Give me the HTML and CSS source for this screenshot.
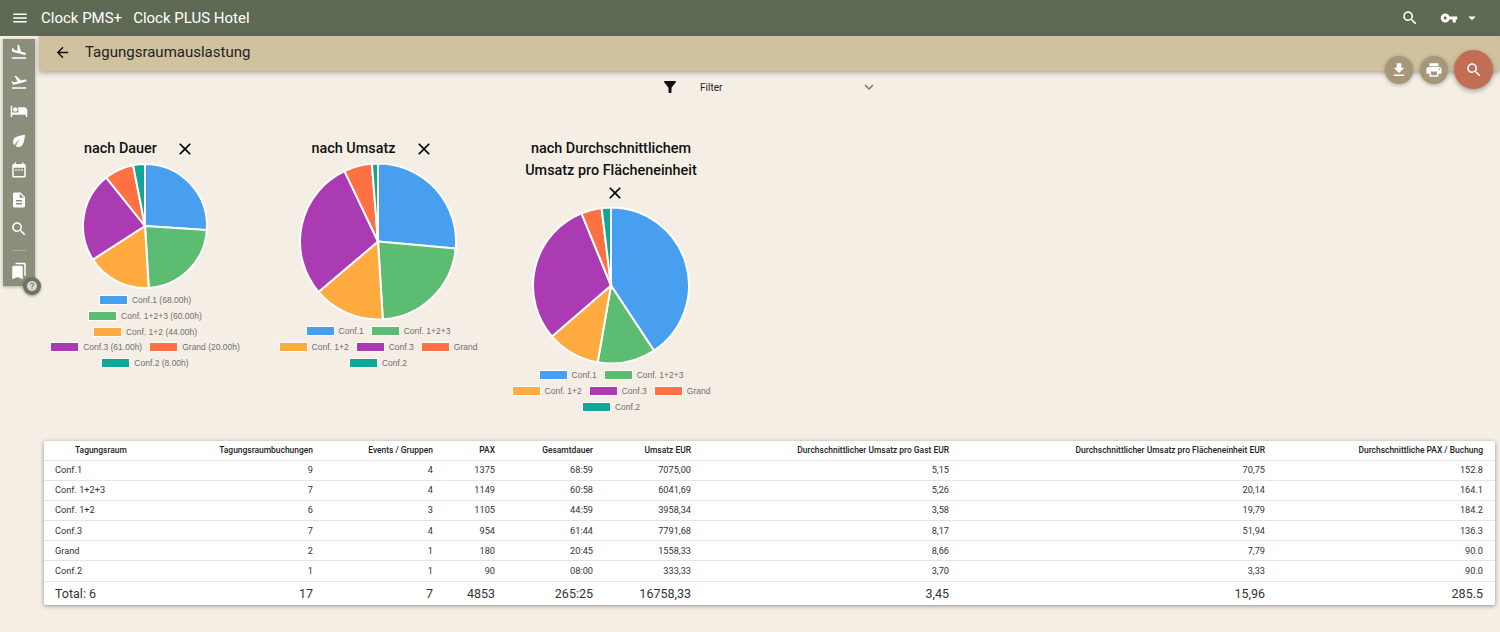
FILE: index.html
```html
<!DOCTYPE html>
<html lang="de">
<head>
<meta charset="utf-8">
<title>Tagungsraumauslastung</title>
<link rel="stylesheet" href="styles.css">
</head>
<body>
<svg class="defs" width="0" height="0" aria-hidden="true">
  <symbol id="i-menu" viewBox="0 0 24 24"><path d="M3 18h18v-2H3v2zm0-5h18v-2H3v2zm0-7v2h18V6H3z"/></symbol>
  <symbol id="i-search" viewBox="0 0 24 24"><path d="M15.5 14h-.79l-.28-.27C15.41 12.59 16 11.11 16 9.5 16 5.91 13.09 3 9.5 3S3 5.91 3 9.5 5.91 16 9.5 16c1.61 0 3.09-.59 4.23-1.57l.27.28v.79l5 4.99L20.49 19l-4.99-5zm-6 0C7.01 14 5 11.99 5 9.5S7.01 5 9.5 5 14 7.01 14 9.5 11.99 14 9.5 14z"/></symbol>
  <symbol id="i-key" viewBox="0 0 24 24"><path d="M12.65 10C11.83 7.67 9.61 6 7 6c-3.31 0-6 2.69-6 6s2.69 6 6 6c2.61 0 4.83-1.67 5.65-4H17v4h4v-4h2v-4H12.65zM7 14c-1.1 0-2-.9-2-2s.9-2 2-2 2 .9 2 2-.9 2-2 2z"/></symbol>
  <symbol id="i-drop" viewBox="0 0 24 24"><path d="M7 10l5 5 5-5z"/></symbol>
  <symbol id="i-back" viewBox="0 0 24 24"><path d="M20 11H7.83l5.59-5.59L12 4l-8 8 8 8 1.41-1.41L7.83 13H20v-2z"/></symbol>
  <symbol id="i-takeoff" viewBox="0 0 24 24"><path d="M2.5 19h19v2h-19zm19.57-9.36c-.21-.8-1.04-1.28-1.84-1.06L14.92 10l-6.9-6.43-1.93.51 4.14 7.17-4.97 1.33-1.97-1.54-1.45.39 1.82 3.16.77 1.33 1.6-.43 5.31-1.42 4.35-1.16L21 11.49c.81-.23 1.28-1.05 1.07-1.85z"/></symbol>
  <symbol id="i-land" viewBox="0 0 24 24"><path d="M2.5 19h19v2h-19zm7.18-5.73l4.35 1.16 5.31 1.42c.8.21 1.62-.26 1.84-1.06.21-.8-.26-1.62-1.06-1.84l-5.31-1.42-2.76-9.02L10.12 2v8.28L5.15 8.95l-.93-2.32-1.45-.39v5.17l1.6.43 5.31 1.43z"/></symbol>
  <symbol id="i-hotel" viewBox="0 0 24 24"><path d="M7 13c1.66 0 3-1.34 3-3S8.66 7 7 7s-3 1.34-3 3 1.34 3 3 3zm12-6h-8v7H3V5H1v15h2v-3h18v3h2v-9c0-2.21-1.79-4-4-4z"/></symbol>
  <symbol id="i-leaf" viewBox="0 0 24 24"><path d="M6.05 8.05c-2.73 2.73-2.73 7.15-.02 9.88 1.47-3.4 4.09-6.24 7.36-7.93-2.77 2.34-4.71 5.61-5.39 9.32 2.6 1.23 5.8.78 7.95-1.37C19.43 14.47 20 4 20 4S9.53 4.57 6.05 8.05z"/></symbol>
  <symbol id="i-date" viewBox="0 0 24 24"><path d="M9 11H7v2h2v-2zm4 0h-2v2h2v-2zm4 0h-2v2h2v-2zm2-7h-1V2h-2v2H8V2H6v2H5c-1.11 0-1.99.9-1.99 2L3 20c0 1.1.89 2 2 2h14c1.1 0 2-.9 2-2V6c0-1.1-.9-2-2-2zm0 16H5V9h14v11z"/></symbol>
  <symbol id="i-doc" viewBox="0 0 24 24"><path d="M14 2H6c-1.1 0-1.99.9-1.99 2L4 20c0 1.1.89 2 1.99 2H18c1.1 0 2-.9 2-2V8l-6-6zm2 16H8v-2h8v2zm0-4H8v-2h8v2zm-3-5V3.5L18.5 9H13z"/></symbol>
  <symbol id="i-books" viewBox="0 0 24 24"><path d="M19 18l2 1V3c0-1.1-.9-2-2-2H8.99C7.89 1 7 1.9 7 3h10c1.1 0 2 .9 2 2v13zM15 5H5c-1.1 0-2 .9-2 2v16l7-3 7 3V7c0-1.1-.9-2-2-2z"/></symbol>
  <symbol id="i-help" viewBox="0 0 24 24"><path d="M12 2C6.48 2 2 6.48 2 12s4.48 10 10 10 10-4.48 10-10S17.52 2 12 2zm1 17h-2v-2h2v2zm2.07-7.75l-.9.92C13.45 12.9 13 13.5 13 15h-2v-.5c0-1.1.45-2.1 1.17-2.83l1.24-1.26c.37-.36.59-.86.59-1.41 0-1.1-.9-2-2-2s-2 .9-2 2H8c0-2.21 1.79-4 4-4s4 1.79 4 4c0 .88-.36 1.68-.93 2.25z"/></symbol>
  <symbol id="i-filter" viewBox="0 0 24 24"><path d="M4.25 5.61C6.27 8.2 10 13 10 13v6c0 .55.45 1 1 1h2c.55 0 1-.45 1-1v-6s3.72-4.8 5.74-7.39c.51-.66.04-1.61-.79-1.61H5.04c-.83 0-1.3.95-.79 1.61z"/></symbol>
  <symbol id="i-download" viewBox="0 0 24 24"><path d="M19 9h-4V3H9v6H5l7 7 7-7zM5 18v2h14v-2H5z"/></symbol>
  <symbol id="i-print" viewBox="0 0 24 24"><path d="M19 8H5c-1.66 0-3 1.34-3 3v6h4v4h12v-4h4v-6c0-1.66-1.34-3-3-3zm-3 11H8v-5h8v5zm3-7c-.55 0-1-.45-1-1s.45-1 1-1 1 .45 1 1-.45 1-1 1zm-1-9H6v4h12V3z"/></symbol>
  <symbol id="i-close" viewBox="0 0 24 24"><path d="M19 6.41L17.59 5 12 10.59 6.41 5 5 6.41 10.59 12 5 17.59 6.41 19 12 13.41 17.59 19 19 17.59 13.41 12z"/></symbol>
  <symbol id="i-more" viewBox="0 0 24 24"><path d="M16.59 8.59L12 13.17 7.41 8.59 6 10l6 6 6-6z"/></symbol>
</svg>

<header class="appbar">
  <svg class="ico ico-menu"><use href="#i-menu"/></svg>
  <span class="brand">Clock PMS+</span>
  <span class="brand">Clock PLUS Hotel</span>
  <span class="spacer"></span>
  <svg class="ico ico-search"><use href="#i-search"/></svg>
  <svg class="ico ico-key"><use href="#i-key"/></svg>
  <svg class="ico ico-drop"><use href="#i-drop"/></svg>
</header>

<nav class="sidenav">
  <svg class="ico nav-ico"><use href="#i-land"/></svg>
  <svg class="ico nav-ico"><use href="#i-takeoff"/></svg>
  <svg class="ico nav-ico"><use href="#i-hotel"/></svg>
  <svg class="ico nav-ico"><use href="#i-leaf"/></svg>
  <svg class="ico nav-ico"><use href="#i-date"/></svg>
  <svg class="ico nav-ico"><use href="#i-doc"/></svg>
  <svg class="ico nav-ico"><use href="#i-search"/></svg>
  <span class="nav-divider"></span>
  <svg class="ico nav-ico"><use href="#i-books"/></svg>
  <span class="help"><svg class="ico ico-help"><use href="#i-help"/></svg></span>
</nav>

<div class="fabs">
  <button class="fab"><svg class="ico ico-fab"><use href="#i-download"/></svg></button>
  <button class="fab"><svg class="ico ico-fab"><use href="#i-print"/></svg></button>
  <button class="fab fab-main"><svg class="ico ico-fab"><use href="#i-search"/></svg></button>
</div>

<div class="main">
  <div class="subbar">
    <svg class="ico ico-back"><use href="#i-back"/></svg>
    <h1 class="page-title">Tagungsraumauslastung</h1>
  </div>

  <div class="filter">
    <svg class="ico ico-filter"><use href="#i-filter"/></svg>
    <span class="filter-label">Filter</span>
    <svg class="ico ico-more"><use href="#i-more"/></svg>
  </div>

  <section class="charts">
    <article class="chart">
      <h2 class="chart-title">nach Dauer<span class="close"><svg class="ico ico-close"><use href="#i-close"/></svg></span></h2>
      <svg class="pie pie-sm" data-r="62" data-values="68,60,44,61,20,8"></svg>
      <div class="legend">
        <div class="lrow"><span class="sw s0"></span><span>Conf.1 (68.00h)</span></div>
        <div class="lrow"><span class="sw s1"></span><span>Conf. 1+2+3 (60.00h)</span></div>
        <div class="lrow"><span class="sw s2"></span><span>Conf. 1+2 (44.00h)</span></div>
        <div class="lrow"><span class="sw s3"></span><span>Conf.3 (61.00h)</span><span class="sw s4 sw-next"></span><span>Grand (20.00h)</span></div>
        <div class="lrow"><span class="sw s5"></span><span>Conf.2 (8.00h)</span></div>
      </div>
    </article>

    <article class="chart">
      <h2 class="chart-title">nach Umsatz<span class="close"><svg class="ico ico-close"><use href="#i-close"/></svg></span></h2>
      <svg class="pie pie-lg" data-r="78" data-values="7075,6041.69,3958.34,7791.68,1558.33,333.33"></svg>
      <div class="legend">
        <div class="lrow"><span class="sw s0"></span><span>Conf.1</span><span class="sw s1 sw-next"></span><span>Conf. 1+2+3</span></div>
        <div class="lrow"><span class="sw s2"></span><span>Conf. 1+2</span><span class="sw s3 sw-next"></span><span>Conf.3</span><span class="sw s4 sw-next"></span><span>Grand</span></div>
        <div class="lrow"><span class="sw s5"></span><span>Conf.2</span></div>
      </div>
    </article>

    <article class="chart">
      <h2 class="chart-title">nach Durchschnittlichem Umsatz pro Flächeneinheit<span class="close"><svg class="ico ico-close"><use href="#i-close"/></svg></span></h2>
      <svg class="pie pie-lg" data-r="78" data-values="70.75,20.9,19,52.4,7.4,3.33"></svg>
      <div class="legend">
        <div class="lrow"><span class="sw s0"></span><span>Conf.1</span><span class="sw s1 sw-next"></span><span>Conf. 1+2+3</span></div>
        <div class="lrow"><span class="sw s2"></span><span>Conf. 1+2</span><span class="sw s3 sw-next"></span><span>Conf.3</span><span class="sw s4 sw-next"></span><span>Grand</span></div>
        <div class="lrow"><span class="sw s5"></span><span>Conf.2</span></div>
      </div>
    </article>
  </section>

  <table class="data">
    <colgroup>
      <col class="c1"><col class="c2"><col class="c3"><col class="c4"><col class="c5"><col class="c6"><col class="c7"><col class="c8"><col class="c9">
    </colgroup>
    <thead>
      <tr>
        <th class="first">Tagungsraum</th><th>Tagungsraumbuchungen</th><th>Events / Gruppen</th><th>PAX</th><th>Gesamtdauer</th><th>Umsatz EUR</th><th>Durchschnittlicher Umsatz pro Gast EUR</th><th>Durchschnittlicher Umsatz pro Flächeneinheit EUR</th><th>Durchschnittliche PAX / Buchung</th>
      </tr>
    </thead>
    <tbody>
      <tr><td>Conf.1</td><td>9</td><td>4</td><td>1375</td><td>68:59</td><td>7075,00</td><td>5,15</td><td>70,75</td><td>152.8</td></tr>
      <tr><td>Conf. 1+2+3</td><td>7</td><td>4</td><td>1149</td><td>60:58</td><td>6041,69</td><td>5,26</td><td>20,14</td><td>164.1</td></tr>
      <tr><td>Conf. 1+2</td><td>6</td><td>3</td><td>1105</td><td>44:59</td><td>3958,34</td><td>3,58</td><td>19,79</td><td>184.2</td></tr>
      <tr><td>Conf.3</td><td>7</td><td>4</td><td>954</td><td>61:44</td><td>7791,68</td><td>8,17</td><td>51,94</td><td>136.3</td></tr>
      <tr><td>Grand</td><td>2</td><td>1</td><td>180</td><td>20:45</td><td>1558,33</td><td>8,66</td><td>7,79</td><td>90.0</td></tr>
      <tr><td>Conf.2</td><td>1</td><td>1</td><td>90</td><td>08:00</td><td>333,33</td><td>3,70</td><td>3,33</td><td>90.0</td></tr>
    </tbody>
    <tfoot>
      <tr><td>Total: 6</td><td>17</td><td>7</td><td>4853</td><td>265:25</td><td>16758,33</td><td>3,45</td><td>15,96</td><td>285.5</td></tr>
    </tfoot>
  </table>
</div>
<script src="script.js"></script>
</body>
</html>
```
FILE: styles.css
```css
* { box-sizing: border-box; }
html, body { margin: 0; height: 632px; overflow: hidden; }
body { background: #f5eee5; font-family: Roboto, "Liberation Sans", sans-serif; color: #111; }
.defs { position: absolute; }
.ico { display: block; fill: currentColor; flex: none; }

.appbar { height: 36px; background: #5f6a54; color: #fff; display: flex; align-items: center; padding-left: 11px; }
.ico-menu { width: 18px; height: 18px; margin-right: 12px; }
.brand { font-size: 15px; margin-right: 11px; white-space: nowrap; }
.spacer { flex: 1; }
.ico-search { width: 18px; height: 18px; margin-right: 21px; }
.ico-key { width: 18px; height: 18px; margin-right: 5px; }
.ico-drop { width: 18px; height: 18px; margin-right: 19px; }

.sidenav { position: absolute; left: 3px; top: 39px; width: 32px; height: 247px; background: #8a8e7b; color: #fff; display: flex; flex-direction: column; align-items: center; padding-top: 4px; box-shadow: 0 1px 3px rgba(0,0,0,.3); }
.nav-ico { width: 18px; height: 18px; margin-bottom: 11.5px; }
.nav-divider { flex: none; width: 14px; height: 1px; background: #a9ad9c; margin: 0 0 11.5px; }
.help { position: absolute; left: 20px; top: 238px; width: 18px; height: 18px; border-radius: 50%; background: #6f7563; color: #d9d9d2; display: flex; align-items: center; justify-content: center; box-shadow: 0 1px 3px rgba(0,0,0,.4); }
.ico-help { width: 12px; height: 12px; }

.fabs { position: absolute; right: 7px; top: 49px; display: flex; align-items: flex-start; gap: 7px; }
.fab { width: 28px; height: 28px; margin: 7px 0 0; padding: 0; border: 0; border-radius: 50%; background: #a6977b; color: #fff; display: flex; align-items: center; justify-content: center; box-shadow: 0 1px 4px rgba(0,0,0,.3); }
.fab-main { width: 39px; height: 39px; margin: 1px 0 0 -1px; background: #c26d55; box-shadow: 0 2px 5px rgba(0,0,0,.35); }
.ico-fab { width: 18px; height: 18px; }

.main { margin-left: 39px; }
.subbar { height: 35px; background: #d0c29e; display: flex; align-items: center; padding: 0 0 2px 15px; box-shadow: 0 2px 5px rgba(0,0,0,.3); }
.ico-back { width: 17px; height: 17px; margin-right: 14px; color: #111; }
.page-title { margin: 0 0 1px; font-size: 15px; font-weight: 400; color: #222; }

.filter { height: 32px; display: flex; align-items: center; justify-content: center; font-size: 10px; }
.ico-filter { width: 18px; height: 18px; margin-right: 21px; }
.filter-label { width: 160px; color: #222; }
.ico-more { width: 18px; height: 18px; color: #777; }

.charts { display: flex; gap: 33px; padding: 35px 0 0 6px; height: 338px; }
.chart { width: 200px; display: flex; flex-direction: column; align-items: center; }
.chart-title { margin: 0; font-size: 14.4px; line-height: 22px; font-weight: 500; text-align: center; color: #111; }
.close { display: inline-block; width: 49px; height: 22px; padding-left: 18px; vertical-align: top; }
.ico-close { width: 20px; height: 20px; margin-top: 1px; color: #000; }
.pie { display: block; width: 200px; margin-top: 3px; flex: none; }
.pie-sm { height: 126px; }
.pie-lg { height: 157px; }
.pie path { stroke: #fff; stroke-width: 2; }
.pie .s0 { fill: #489ff0; }
.pie .s1 { fill: #5cbd72; }
.pie .s2 { fill: #ffab40; }
.pie .s3 { fill: #ab3bb3; }
.pie .s4 { fill: #ff7043; }
.pie .s5 { fill: #12a698; }

.legend { margin-top: 3.5px; font-family: "Liberation Sans", Arial, sans-serif; font-size: 8.5px; color: #6e6e6e; white-space: nowrap; }
.lrow { height: 15.7px; display: flex; align-items: center; justify-content: center; }
.sw { width: 29px; height: 10px; border: 1px solid #fff; margin-right: 4px; }
.sw-next { margin-left: 7px; }
.sw.s0 { background: #489ff0; }
.sw.s1 { background: #5cbd72; }
.sw.s2 { background: #ffab40; }
.sw.s3 { background: #ab3bb3; }
.sw.s4 { background: #ff7043; }
.sw.s5 { background: #12a698; }

.data { width: 1451px; margin-left: 5px; table-layout: fixed; border-collapse: collapse; background: #fff; border-radius: 2px; box-shadow: 0 1px 4px rgba(0,0,0,.4); font-size: 9.2px; color: #333; }
.c1 { width: 100px; }
.c2 { width: 181px; }
.c3 { width: 120px; }
.c4 { width: 62px; }
.c5 { width: 98px; }
.c6 { width: 98px; }
.c7 { width: 258px; }
.c8 { width: 316px; }
.c9 { width: 218px; }
.data th, .data td { padding: 0 12px 0 0; text-align: right; white-space: nowrap; }
.data th { height: 19px; padding-bottom: 1px; font-size: 8.45px; font-weight: 500; color: #222; border-bottom: 1px solid #e4e4e4; }
.data tbody td { height: 20.2px; padding-bottom: 1px; border-bottom: 1px solid #e4e4e4; }
.data tfoot td { height: 24px; font-size: 12.5px; color: #333; }
.data th.first { text-align: left; padding-left: 31px; }
.data td:first-child { text-align: left; padding-left: 11px; }
```
FILE: script.js
```js
document.querySelectorAll('.pie').forEach(function (svg) {
  var values = svg.dataset.values.split(',').map(Number);
  var r = Number(svg.dataset.r);
  var box = svg.getBoundingClientRect();
  var cx = box.width / 2, cy = box.height / 2;
  var total = values.reduce(function (a, b) { return a + b; }, 0);
  var angle = -Math.PI / 2;
  values.forEach(function (v, i) {
    var next = angle + (v / total) * 2 * Math.PI;
    var large = next - angle > Math.PI ? 1 : 0;
    var d = 'M' + cx + ' ' + cy +
      'L' + (cx + r * Math.cos(angle)) + ' ' + (cy + r * Math.sin(angle)) +
      'A' + r + ' ' + r + ' 0 ' + large + ' 1 ' + (cx + r * Math.cos(next)) + ' ' + (cy + r * Math.sin(next)) + 'Z';
    var p = document.createElementNS('http://www.w3.org/2000/svg', 'path');
    p.setAttribute('d', d);
    p.setAttribute('class', 's' + i);
    svg.appendChild(p);
    angle = next;
  });
});
```
